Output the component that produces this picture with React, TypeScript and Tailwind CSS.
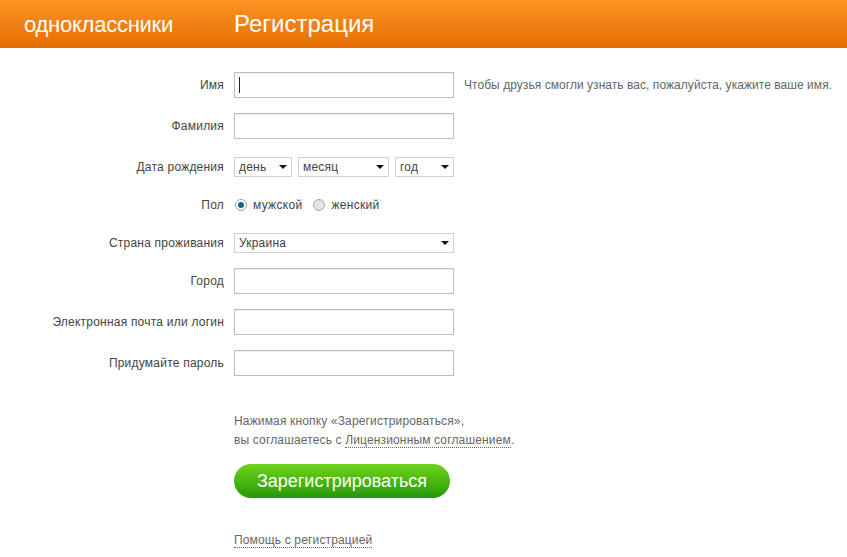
const font = "font-['Liberation_Sans',Arial,sans-serif]";

function Field({ label, children, className = '' }: { label: string; children: React.ReactNode; className?: string }) {
  return (
    <div className={`flex items-center ${className}`}>
      <div className="w-[224px] text-right text-xs tracking-[0.22px] text-[#444]">{label}</div>
      <div className="ml-[10px] flex items-center">{children}</div>
    </div>
  );
}

function TextInput({ caret }: { caret?: boolean }) {
  return (
    <div className="flex h-[26px] w-[220px] items-center border border-[#bdbdbd] bg-white pl-[4px] shadow-[inset_0_1px_1px_rgba(0,0,0,0.06)]">
      {caret && <div className="h-[16px] w-px bg-[#222]" />}
    </div>
  );
}

function Select({ value, width }: { value: string; width: string }) {
  return (
    <div className={`flex h-[20px] items-center justify-between border border-[#d0d0d0] bg-white pl-[4px] pr-[4px] text-xs tracking-[0.2px] text-[#444] ${width}`}>
      <span>{value}</span>
      <span className="h-0 w-0 border-x-[4px] border-t-[4px] border-x-transparent border-t-[#111]" />
    </div>
  );
}

function Radio({ checked }: { checked?: boolean }) {
  return (
    <span className={`flex h-[12px] w-[12px] items-center justify-center rounded-full border ${checked ? 'border-[#8aa5bd] bg-white' : 'border-[#a9a9a9] bg-[#e4e4e4]'}`}>
      {checked && <span className="h-[6px] w-[6px] rounded-full bg-[#1f5f8b]" />}
    </span>
  );
}

export default function App() {
  return (
    <div className={`h-[557px] w-[847px] overflow-hidden bg-white ${font}`}>
      <header className="flex h-[48px] items-center bg-gradient-to-b from-[#ff9422] to-[#e36e00] text-white">
        <div className="ml-[24px] w-[210px] text-[22px] tracking-[-0.25px]">одноклассники</div>
        <h1 className="text-[24px]">Регистрация</h1>
      </header>

      <main className="pt-[24px]">
        <div className="flex items-center">
          <Field label="Имя">
            <TextInput caret />
          </Field>
          <p className="ml-[10px] whitespace-nowrap text-xs tracking-[0.05px] text-[#666]">
            Чтобы друзья смогли узнать вас, пожалуйста, укажите ваше имя.
          </p>
        </div>
        <Field label="Фамилия" className="mt-[15px]">
          <TextInput />
        </Field>
        <Field label="Дата рождения" className="mt-[18px]">
          <div className="flex gap-[6px]">
            <Select value="день" width="w-[58px]" />
            <Select value="месяц" width="w-[91px]" />
            <Select value="год" width="w-[59px]" />
          </div>
        </Field>
        <Field label="Пол" className="mt-[18px] h-[20px]">
          <div className="flex items-center pl-px text-xs tracking-[0.3px] text-[#444]">
            <Radio checked />
            <span className="ml-[6px]">мужской</span>
            <span className="ml-[11px]">
              <Radio />
            </span>
            <span className="ml-[6px]">женский</span>
          </div>
        </Field>
        <Field label="Страна проживания" className="mt-[18px]">
          <Select value="Украина" width="w-[220px]" />
        </Field>
        <Field label="Город" className="mt-[15px]">
          <TextInput />
        </Field>
        <Field label="Электронная почта или логин" className="mt-[15px]">
          <TextInput />
        </Field>
        <Field label="Придумайте пароль" className="mt-[15px]">
          <TextInput />
        </Field>

        <div className="ml-[234px] mt-[36px] text-xs leading-[19px] tracking-[0.15px] text-[#666]">
          <p>Нажимая кнопку «Зарегистрироваться»,</p>
          <p>
            вы соглашаетесь с{' '}
            <a className="border-b border-dotted border-[#666]">Лицензионным соглашением</a>.
          </p>
        </div>

        <button className="ml-[234px] mt-[14px] block h-[34px] w-[216px] rounded-full bg-gradient-to-b from-[#6fd41c] to-[#209a06] text-center text-[18px] text-white">
          Зарегистрироваться
        </button>

        <div className="ml-[234px] mt-[35px] text-xs leading-[15px] tracking-[0.15px] text-[#666]">
          <a className="border-b border-dotted border-[#666]">Помощь с регистрацией</a>
        </div>
      </main>
    </div>
  );
}
